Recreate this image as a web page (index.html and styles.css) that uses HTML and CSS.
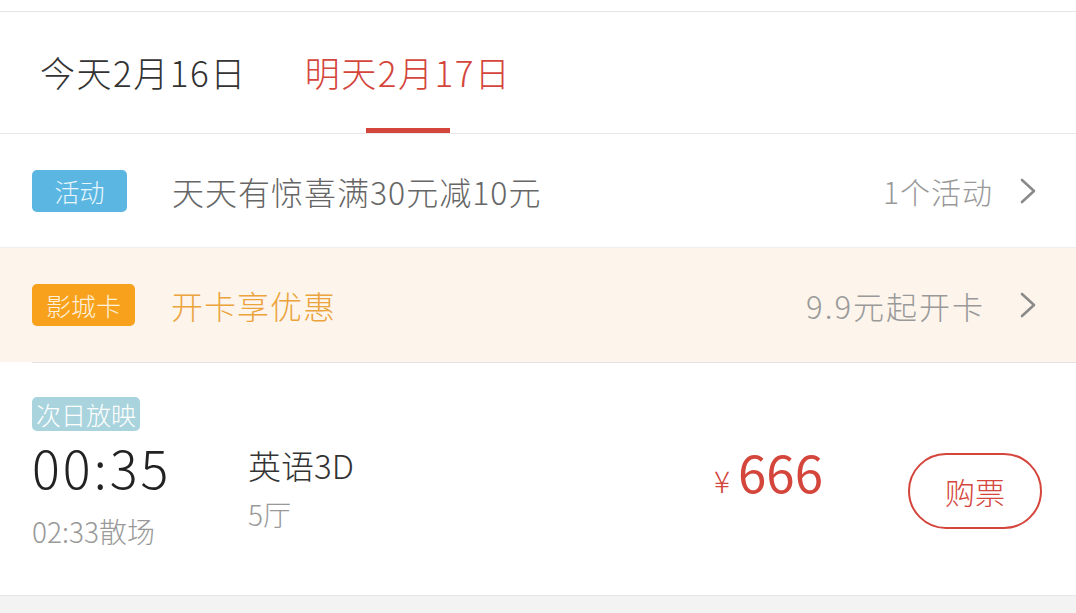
FILE: index.html
```html
<!DOCTYPE html>
<html lang="zh-CN">

<head>
  <meta charset="UTF-8" />
  <meta name="viewport" content="width=device-width, initial-scale=1" />
  <title>选择场次</title>
  <link rel="stylesheet" href="styles.css">
</head>

<body>
  <div class="top-gap"></div>

  <div class="tabs">
    <div class="tab">今天2月16日</div>
    <div class="tab active">明天2月17日</div>
  </div>

  <div class="promo">
    <span class="badge badge-blue">活动</span>
    <span class="promo-text">天天有惊喜满30元减10元</span>
    <span class="promo-more">1个活动</span>
    <svg class="chevron" width="16" height="26" viewBox="0 0 16 26"><polyline points="2,2 14,13 2,24" fill="none" stroke="#8a8a8a" stroke-width="2.6" stroke-linecap="round" stroke-linejoin="round"/></svg>
  </div>

  <div class="promo promo-card">
    <span class="badge badge-orange">影城卡</span>
    <span class="promo-text orange">开卡享优惠</span>
    <span class="promo-more wide">9.9元起开卡</span>
    <svg class="chevron" width="16" height="26" viewBox="0 0 16 26"><polyline points="2,2 14,13 2,24" fill="none" stroke="#8a8a8a" stroke-width="2.6" stroke-linecap="round" stroke-linejoin="round"/></svg>
  </div>

  <div class="shows">
    <div class="show">
      <span class="next-day">次日放映</span>
      <div class="show-main">
        <div class="times">
          <div class="start">00:35</div>
          <div class="end">02:33散场</div>
        </div>
        <div class="info">
          <div class="lang">英语3D</div>
          <div class="hall">5厅</div>
        </div>
        <div class="price"><span class="yen">¥</span>666</div>
        <button class="buy">购票</button>
      </div>
    </div>
  </div>

  <div class="footer-gap"></div>
</body>

</html>
```

FILE: styles.css
```css
* {
  margin: 0;
  padding: 0;
  box-sizing: border-box;
}

body {
  font-family: 'Noto Sans CJK SC', 'Noto Sans', sans-serif;
  font-weight: 300;
  background: #fff;
  color: #333;
}

.top-gap {
  height: 12px;
  border-bottom: 1px solid #e6e6e6;
}

/* tanggal */
.tabs {
  display: flex;
  gap: 58px;
  height: 122px;
  padding-left: 40px;
  border-bottom: 1px solid #e8e8e8;
}

.tab {
  position: relative;
  display: flex;
  align-items: center;
  font-size: 35px;
  letter-spacing: 1.5px;
  color: #333;
  padding-bottom: 2px;
}

.tab.active {
  color: #d4453c;
}

.tab.active::after {
  content: '';
  position: absolute;
  left: 50%;
  bottom: 0;
  width: 84px;
  height: 5px;
  margin-left: -42px;
  background: #d4453c;
}

/* promo */
.promo {
  display: flex;
  align-items: center;
  height: 114px;
  padding: 0 40px 0 32px;
  border-bottom: 1px solid #eee;
}

.promo-card {
  background: #fdf5ec;
  border-bottom: none;
}

.badge {
  display: inline-block;
  min-width: 95px;
  height: 42px;
  line-height: 42px;
  padding: 0 14px;
  border-radius: 5px;
  color: #fff;
  font-size: 25px;
  text-align: center;
}

.badge-blue {
  background: #5bb6e2;
  color: #e9f7fd;
}

.badge-orange {
  background: #f8a11c;
  color: #fdf1dc;
}

.promo-text {
  flex: 1;
  margin-left: 45px;
  font-size: 32px;
  letter-spacing: 1px;
  color: #666;
}

.promo-card .promo-text {
  margin-left: 36px;
}

.promo-text.orange {
  color: #eba43c;
}

.promo-more {
  font-size: 30px;
  letter-spacing: 1px;
  color: #999;
}

.promo-more.wide {
  font-size: 31px;
  letter-spacing: 2px;
  margin-right: 8px;
}

.chevron {
  margin-left: 27px;
}

/* jadwal */
.shows {
  background: #fff;
}

.show {
  margin-left: 32px;
  padding: 34px 34px 44px 0;
  border-top: 1px solid #e3e3e3;
}

.next-day {
  display: inline-block;
  height: 34px;
  line-height: 34px;
  padding: 0 4px;
  border-radius: 5px;
  background: #a9d4dd;
  color: #fff;
  font-size: 25px;
}

.show-main {
  display: flex;
  align-items: flex-start;
  margin-top: 6px;
}

.times {
  width: 216px;
}

.start {
  font-size: 52px;
  line-height: 60px;
  color: #222;
  letter-spacing: 3px;
}

.end {
  margin-top: 14px;
  font-size: 28px;
  line-height: 40px;
  color: #999;
}

.info {
  flex: 1;
  padding-top: 6px;
}

.lang {
  font-size: 33px;
  line-height: 44px;
  color: #333;
}

.hall {
  margin-top: 7px;
  font-size: 28px;
  line-height: 40px;
  color: #999;
}

.price {
  width: 194px;
  padding-top: 2px;
  font-size: 51px;
  font-weight: 400;
  line-height: 64px;
  color: #d4453c;
}

.yen {
  font-size: 30px;
  font-weight: 300;
  margin-right: 8px;
}

.buy {
  width: 134px;
  height: 76px;
  margin-top: 16px;
  border: 2px solid #d4453c;
  border-radius: 38px;
  background: #fff;
  color: #d4453c;
  font-family: inherit;
  font-weight: 300;
  font-size: 30px;
}

.footer-gap {
  height: 40px;
  background: #f3f3f3;
  border-top: 1px solid #e6e6e6;
}
```
